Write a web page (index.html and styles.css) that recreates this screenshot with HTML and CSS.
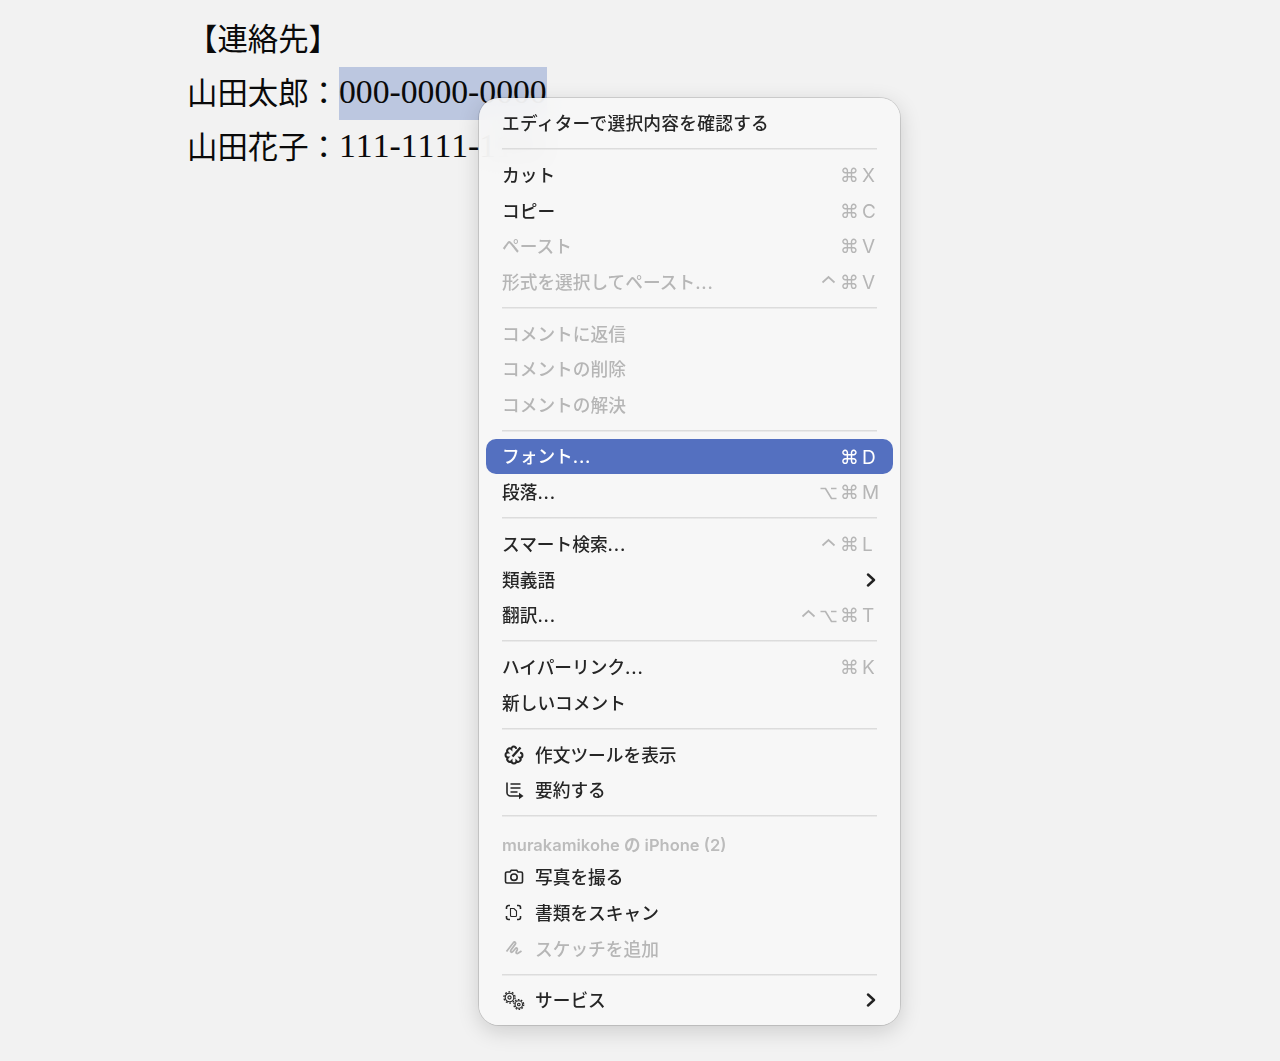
FILE: index.html
```html
<!DOCTYPE html>
<html lang="ja">
<head>
<meta charset="utf-8">
<title>連絡先</title>
<link rel="stylesheet" href="styles.css">
</head>
<body>
<svg class="defs" width="0" height="0" aria-hidden="true">
  <symbol id="ctrl" viewBox="0 0 17 14"><path d="M2.500 7.500 8.500 2l6 5.500"/></symbol>
  <symbol id="opt" viewBox="0 0 17 14"><path d="M.5 2.500h5l6 10h5M11 2.500h5.500"/></symbol>
  <symbol id="chev" viewBox="0 0 10 14"><path d="M2 1.500 8 7l-6 5.500"/></symbol>
</svg>
<main class="doc">
  <p class="line">【連絡先】</p>
  <p class="line">山田太郎：<span class="num sel">000-0000-0000</span></p>
  <p class="line">山田花子：<span class="num">111-1111-1111</span></p>
</main>
<div class="menu">
  <div class="row"><span class="label wide">エディターで選択内容を確認する</span></div>
  <hr class="sep">
  <div class="row"><span class="label">カット</span><span class="keys"><span class="k">⌘</span><span class="l">X</span></span></div>
  <div class="row"><span class="label">コピー</span><span class="keys"><span class="k">⌘</span><span class="l">C</span></span></div>
  <div class="row off"><span class="label">ペースト</span><span class="keys"><span class="k">⌘</span><span class="l">V</span></span></div>
  <div class="row off"><span class="label">形式を選択してペースト<span class="dots">...</span></span><span class="keys"><svg class="m"><use href="#ctrl"/></svg><span class="k">⌘</span><span class="l">V</span></span></div>
  <hr class="sep">
  <div class="row off"><span class="label">コメントに返信</span></div>
  <div class="row off"><span class="label">コメントの削除</span></div>
  <div class="row off"><span class="label">コメントの解決</span></div>
  <hr class="sep">
  <div class="row active"><span class="label">フォント<span class="dots">...</span></span><span class="keys"><span class="k">⌘</span><span class="l">D</span></span></div>
  <div class="row"><span class="label">段落<span class="dots">...</span></span><span class="keys"><svg class="m"><use href="#opt"/></svg><span class="k">⌘</span><span class="l">M</span></span></div>
  <hr class="sep">
  <div class="row"><span class="label">スマート検索<span class="dots">...</span></span><span class="keys"><svg class="m"><use href="#ctrl"/></svg><span class="k">⌘</span><span class="l">L</span></span></div>
  <div class="row"><span class="label">類義語</span><svg class="chev"><use href="#chev"/></svg></div>
  <div class="row"><span class="label">翻訳<span class="dots">...</span></span><span class="keys"><svg class="m"><use href="#ctrl"/></svg><svg class="m"><use href="#opt"/></svg><span class="k">⌘</span><span class="l">T</span></span></div>
  <hr class="sep">
  <div class="row"><span class="label">ハイパーリンク<span class="dots">...</span></span><span class="keys"><span class="k">⌘</span><span class="l">K</span></span></div>
  <div class="row"><span class="label">新しいコメント</span></div>
  <hr class="sep">
  <div class="row">
    <svg class="ico" viewBox="0 0 20 20"><path class="scallop" d="M16.100 8.800A2.400 2.400 0 0 1 15.900 13.700A2.400 2.400 0 0 1 12.400 17.050A2.400 2.400 0 0 1 7.500 17A2.400 2.400 0 0 1 4 13.500A2.400 2.400 0 0 1 3.950 8.600A2.400 2.400 0 0 1 7.350 5.100A2.400 2.400 0 0 1 12.200 4.900"/><path class="pen" d="M8.500 12.500 16.500 3.500"/></svg>
    <span class="label">作文ツールを表示</span>
  </div>
  <div class="row">
    <svg class="ico" viewBox="0 0 20 20"><path d="M3 2.500V12.500a3.500 3.500 0 0 0 3.500 3.500h9"/><path d="M6.500 4H16.500M6.500 8H16.500M6.500 12H13.500"/><path class="fill" d="M15 12.800 19.500 16 15 19.200z"/></svg>
    <span class="label">要約する</span>
  </div>
  <hr class="sep">
  <div class="row head"><span class="label">murakamikohe の iPhone (2)</span></div>
  <div class="row">
    <svg class="ico" viewBox="0 0 20 20"><path d="M3 5h3l1.300-1.800h5.400L14 5h3a1.500 1.500 0 0 1 1.500 1.500v8A1.500 1.500 0 0 1 17 16H3a1.500 1.500 0 0 1-1.500-1.500v-8A1.500 1.500 0 0 1 3 5z"/><circle cx="10" cy="10.200" r="3.200"/></svg>
    <span class="label">写真を撮る</span>
  </div>
  <div class="row">
    <svg class="ico" viewBox="0 0 20 20"><path d="M2.500 6V4.500a2 2 0 0 1 2-2H6M13 2.500h1.500a2 2 0 0 1 2 2V6M16.500 13v1.500a2 2 0 0 1-2 2H13M6 16.500H4.500a2 2 0 0 1-2-2V13"/><path class="thin" d="M6.500 5.500h3.500L12.500 8v4.500a1 1 0 0 1-1 1h-4a1 1 0 0 1-1-1z"/></svg>
    <span class="label">書類をスキャン</span>
  </div>
  <div class="row off">
    <svg class="ico" viewBox="0 0 20 20"><path class="sketch" d="M2.500 12.500 9.500 3.500c1.300-1.300 2.800.3 1.800 1.600L7 11c-1.200 1.800.6 3 1.900 1.500l2.600-3c1.100-1.100 2.300 0 1.700 1.300l-1 2c-.6 1.300.8 2.200 1.800 1.500l3.500-2.300"/></svg>
    <span class="label">スケッチを追加</span>
  </div>
  <hr class="sep">
  <div class="row">
    <svg class="ico gear" viewBox="0 0 20 20"><circle class="teeth" cx="5.500" cy="7.500" r="5.600" stroke-dasharray="1.800 1.720"/><circle class="thin" cx="5.500" cy="7.500" r="4.300"/><circle class="thin" cx="5.500" cy="7.500" r="1.600"/><circle class="teeth" cx="14.800" cy="14.500" r="4.900" stroke-dasharray="1.600 1.480"/><circle class="thin" cx="14.800" cy="14.500" r="3.700"/><circle class="thin" cx="14.800" cy="14.500" r="1.300"/></svg>
    <span class="label">サービス</span>
    <svg class="chev"><use href="#chev"/></svg>
  </div>
</div>
</body>
</html>
```
FILE: styles.css
```css
* { box-sizing: border-box; }
html, body { margin: 0; padding: 0; height: 100%; }
body {
  background: #f2f2f2;
  overflow: hidden;
  position: relative;
  font-family: "Noto Sans CJK JP", sans-serif;
}
.defs { position: absolute; }
.doc {
  padding: 13px 0 0 187px;
  color: #0a0a0a;
  font-size: 30.400px;
  font-family: "Liberation Serif", "Noto Sans CJK JP", serif;
}
.line {
  margin: 0;
  height: 54px;
  line-height: 54px;
  white-space: nowrap;
}
.num {
  font-size: 33.700px;
  font-kerning: none;
  display: inline-block;
  height: 53px;
  line-height: 50px;
  vertical-align: top;
}
.sel { background: #bcc7e0; }
.menu {
  position: absolute;
  left: 479px;
  top: 98px;
  width: 421px;
  height: 927px;
  padding: 7.550px 7px 0;
  background: rgba(247, 247, 247, 0.9);
  -webkit-backdrop-filter: blur(14px);
  backdrop-filter: blur(14px);
  border-radius: 20px;
  box-shadow: 0 0 0 1px rgba(0, 0, 0, 0.13), 0 6px 22px rgba(0, 0, 0, 0.16);
  color: #262626;
  font-size: 17.700px;
  font-weight: 500;
}
.row {
  height: 35.600px;
  display: flex;
  align-items: center;
  padding: 0 16px;
  border-radius: 10px;
  white-space: nowrap;
}
.label { line-height: 1; flex: 0 0 auto; }
.wide { letter-spacing: 0.270px; }
.dots { letter-spacing: 0.800px; font-family: Inter, sans-serif; }
.off { color: #b6b6b6; }
.active { background: #5470c0; color: #fff; }
.head {
  color: #bcbcbc;
  font-family: Inter, "Noto Sans CJK JP", sans-serif;
  font-size: 16.500px;
  font-weight: 600;
  padding-top: 7px;
}
.sep {
  border: 0;
  height: 16.200px;
  margin: 0 16px;
  background: linear-gradient(#dcdcdc, #dcdcdc) center / 100% 1.500px no-repeat;
}
.keys {
  margin-left: auto;
  margin-right: 1px;
  display: flex;
  align-items: center;
  gap: 3px;
  padding-top: 1px;
  color: #b6b6b6;
  font-family: Inter, sans-serif;
  font-size: 19px;
  font-weight: 400;
  line-height: 1;
}
.active .keys { color: #fff; }
.k {
  font-family: "DejaVu Sans", sans-serif;
  width: 17px;
  text-align: center;
  font-size: 19px;
}
.m {
  width: 17px;
  height: 14px;
  fill: none;
  stroke: currentColor;
  stroke-width: 1.700;
}
.l { width: 14px; margin-left: 2px; }
.ico {
  width: 20px;
  height: 20px;
  margin: 0 11px 0 2px;
  fill: none;
  stroke: currentColor;
  stroke-width: 1.600;
  flex: 0 0 auto;
  overflow: visible;
}
.ico .fill { fill: currentColor; stroke: none; }
.ico .pen { stroke-width: 2.400; }
.ico .scallop { stroke-width: 2; }
.ico .sketch { stroke-width: 1.800; }
.ico .thin { stroke-width: 1.100; }
.ico .teeth { stroke-width: 1.300; }
.chev {
  margin-left: auto;
  margin-right: 1px;
  width: 10px;
  height: 14px;
  fill: none;
  stroke: #222;
  stroke-width: 2.400;
  stroke-linecap: round;
  stroke-linejoin: round;
}
```
